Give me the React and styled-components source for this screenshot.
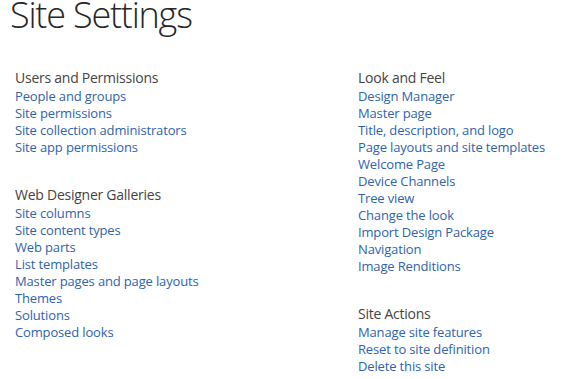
import React from 'react';
import styled, { createGlobalStyle } from 'styled-components';

const GlobalStyle = createGlobalStyle`
  html, body {
    margin: 0;
    padding: 0;
    background: #ffffff;
  }
  body {
    font-family: "Open Sans", "Noto Sans", "Liberation Sans", sans-serif;
  }
`;

const Page = styled.div`
  width: 568px;
  height: 379px;
  overflow: hidden;
  padding: 0 0 0 10px;
  box-sizing: border-box;
`;

const Title = styled.h1`
  margin: 0;
  font-family: "Open Sans", "Noto Sans", sans-serif;
  font-weight: 300;
  font-size: 36px;
  line-height: 30px;
  letter-spacing: -1.2px;
  color: #262626;
`;

const Columns = styled.div`
  display: grid;
  grid-template-columns: 343px 1fr;
  padding: 37px 0 0 5px;
`;

const Column = styled.div`
  display: flex;
  flex-direction: column;
  gap: 28px;
`;

const Section = styled.div`
  display: flex;
  flex-direction: column;
`;

const Heading = styled.h2`
  margin: 0;
  font-weight: 400;
  font-size: 14px;
  line-height: 21px;
  color: #444444;
  letter-spacing: -0.25px;
`;

const Link = styled.a`
  display: block;
  font-size: 13px;
  line-height: 17px;
  color: #2f63ad;
  text-decoration: none;
  letter-spacing: -0.15px;
  cursor: pointer;
`;

const left = [
  {
    title: 'Users and Permissions',
    links: ['People and groups', 'Site permissions', 'Site collection administrators', 'Site app permissions']
  },
  {
    title: 'Web Designer Galleries',
    links: ['Site columns', 'Site content types', 'Web parts', 'List templates', 'Master pages and page layouts', 'Themes', 'Solutions', 'Composed looks']
  }
];

const right = [
  {
    title: 'Look and Feel',
    links: ['Design Manager', 'Master page', 'Title, description, and logo', 'Page layouts and site templates', 'Welcome Page', 'Device Channels', 'Tree view', 'Change the look', 'Import Design Package', 'Navigation', 'Image Renditions']
  },
  {
    title: 'Site Actions',
    links: ['Manage site features', 'Reset to site definition', 'Delete this site']
  }
];

const SettingsColumn = ({ sections }) => (
  <Column>
    {sections.map(s => (
      <Section key={s.title}>
        <Heading>{s.title}</Heading>
        {s.links.map(l => <Link key={l}>{l}</Link>)}
      </Section>
    ))}
  </Column>
);

export default function App() {
  return (
    <Page>
      <GlobalStyle />
      <Title>Site Settings</Title>
      <Columns>
        <SettingsColumn sections={left} />
        <SettingsColumn sections={right} />
      </Columns>
    </Page>
  );
}
